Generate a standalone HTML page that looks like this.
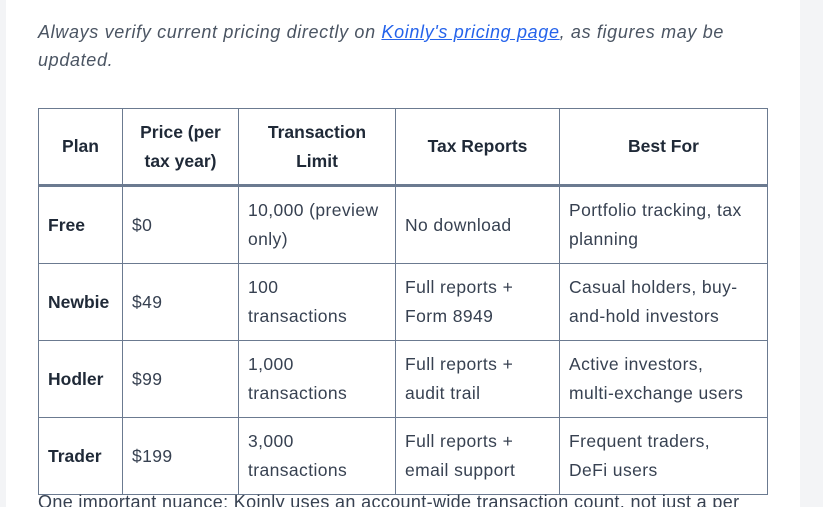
<!DOCTYPE html>
<html><head><style>
html,body{margin:0;padding:0;width:823px;height:507px;overflow:hidden;}
body{background:#f3f4f6;position:relative;font-family:"Liberation Sans",sans-serif;}
.card{position:absolute;left:6px;top:0;width:794px;height:507px;background:#fff;}
p{position:absolute;left:38px;margin:0;font-size:18px;letter-spacing:0.35px;line-height:28px;color:#4b5563;}
p.i{top:18px;font-style:italic;width:720px;letter-spacing:0.65px;}
a{color:#2563eb;text-decoration:underline;}
table{position:absolute;left:38px;top:108px;border-collapse:collapse;table-layout:fixed;width:729px;font-size:17.5px;letter-spacing:0.4px;color:#374151;}
td,th{border:1px solid #6b7a90;padding:0 9px;line-height:29px;vertical-align:middle;text-align:left;font-weight:normal;}
th{font-weight:bold;text-align:center;height:75px;color:#1f2937;letter-spacing:0;}
thead tr{border-bottom:3px solid #6b7a90;}
tbody td{height:76px;}
td.b{font-weight:bold;color:#1f2937;letter-spacing:0;}
p.n{top:488px;color:#374151;}
</style></head><body>
<div class="card"></div>
<p class="i">Always verify current pricing directly on <a>Koinly's pricing page</a>, as figures may be updated.</p>
<table>
<colgroup><col style="width:84px"><col style="width:116px"><col style="width:157px"><col style="width:164px"><col style="width:208px"></colgroup>
<thead><tr><th>Plan</th><th>Price (per tax year)</th><th>Transaction Limit</th><th>Tax Reports</th><th>Best For</th></tr></thead>
<tbody>
<tr><td class="b">Free</td><td>$0</td><td>10,000 (preview only)</td><td>No download</td><td>Portfolio tracking, tax planning</td></tr>
<tr><td class="b">Newbie</td><td>$49</td><td>100<br>transactions</td><td>Full reports +<br>Form 8949</td><td>Casual holders, buy-<br>and-hold investors</td></tr>
<tr><td class="b">Hodler</td><td>$99</td><td>1,000<br>transactions</td><td>Full reports +<br>audit trail</td><td>Active investors,<br>multi-exchange users</td></tr>
<tr><td class="b">Trader</td><td>$199</td><td>3,000<br>transactions</td><td>Full reports +<br>email support</td><td>Frequent traders,<br>DeFi users</td></tr>
</tbody></table>
<p class="n">One important nuance: Koinly uses an account-wide transaction count, not just a per</p>
</body></html>
